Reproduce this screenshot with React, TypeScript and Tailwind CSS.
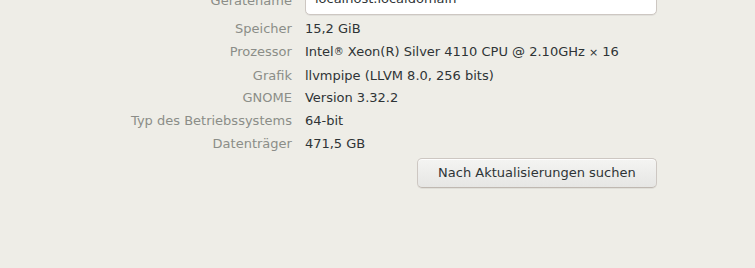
// Einstellungen › Info — Detailansicht

const rows: { label: string; value: React.ReactNode }[] = [
  { label: 'Speicher', value: '15,2 GiB' },
  {
    label: 'Prozessor',
    value: (
      <>
        Intel<sup className="text-[10px] relative -top-[1px]">®</sup> Xeon(R) Silver 4110 CPU @ 2.10GHz{' '}
        <span className="text-[11px]">×</span> 16
      </>
    ),
  },
  { label: 'Grafik', value: 'llvmpipe (LLVM 8.0, 256 bits)' },
  { label: 'GNOME', value: 'Version 3.32.2' },
  { label: 'Typ des Betriebssystems', value: '64-bit' },
  { label: 'Datenträger', value: '471,5 GB' },
]

export default function App() {
  return (
    <div
      className="w-[755px] h-[268px] overflow-hidden bg-[#eeede7] text-[13px]"
      style={{ fontFamily: '"DejaVu Sans", "Noto Sans", sans-serif' }}
    >
      <div className="ml-[131px] -mt-[17px] grid grid-cols-[max-content_352px] justify-start gap-x-[13px] items-center">
        {/* Gerätename + Eingabefeld */}
        <span className="text-right text-[#8b8d88]">Gerätename</span>
        <div className="h-[32px] mb-[3px] flex items-center px-[9px] bg-white border border-[#cdc7c2] rounded-[5px] shadow-[0_1px_0_rgba(0,0,0,0.05)] text-[#2e3436]">
          localhost.localdomain
        </div>

        {rows.map((r) => (
          <div key={r.label} className="contents">
            <span className="text-right leading-[22.75px] text-[#8b8d88] whitespace-nowrap">{r.label}</span>
            <span className="leading-[22.75px] text-[#2e3436] whitespace-nowrap">{r.value}</span>
          </div>
        ))}

        <div />
        <div className="flex justify-end mt-[2px]">
          <button className="w-[240px] h-[30px] rounded-[5px] border border-[#cdc7c2] border-b-[#bfb8b1] bg-gradient-to-b from-[#f4f4f2] to-[#e6e6e4] text-[#2e3436] shadow-[inset_0_1px_0_rgba(255,255,255,0.8),0_1px_0_rgba(0,0,0,0.06)]">
            Nach Aktualisierungen suchen
          </button>
        </div>
      </div>
    </div>
  )
}
